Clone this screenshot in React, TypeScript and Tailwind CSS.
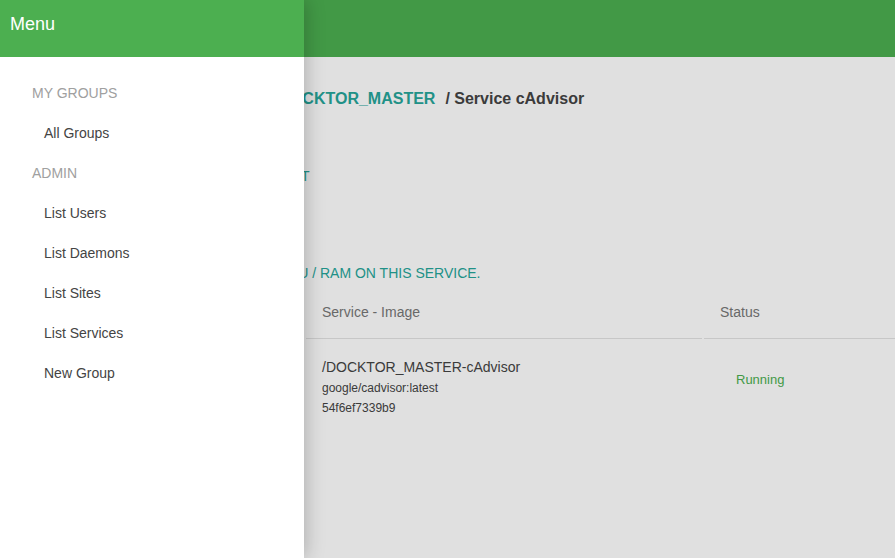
import React from 'react';

const menu = [
  { type: 'header', label: 'My Groups' },
  { type: 'item', label: 'All Groups' },
  { type: 'header', label: 'Admin' },
  { type: 'item', label: 'List Users' },
  { type: 'item', label: 'List Daemons' },
  { type: 'item', label: 'List Sites' },
  { type: 'item', label: 'List Services' },
  { type: 'item', label: 'New Group' },
];

const Sidenav = () => (
  <aside className="absolute left-0 top-0 h-full w-[304px] bg-white shadow-[2px_0_18px_rgba(0,0,0,0.22)]">
    <div className="flex h-[57px] items-center bg-[#4caf50] px-[10px] pb-[8px]">
      <h2 className="text-[18px] font-normal text-white">Menu</h2>
    </div>
    <ul className="pt-[16px]">
      {menu.map(m =>
        m.type === 'header' ? (
          <li key={m.label} className="flex h-[40px] items-center pl-[32px] text-[14px] uppercase text-[#a0a0a0]">
            {m.label}
          </li>
        ) : (
          <li key={m.label} className="flex h-[40px] items-center pl-[44px] text-[14px] text-[#444]">
            {m.label}
          </li>
        )
      )}
    </ul>
  </aside>
);

export default function App() {
  return (
    <div className="relative h-[558px] w-[895px] overflow-hidden bg-white font-['Liberation_Sans',Arial,sans-serif]">
      <header className="flex h-[57px] items-center bg-[#4caf50] px-4 text-white">
        <span className="text-[20px]">Docktor</span>
      </header>

      <main className="pl-[24px]">
        <div className="mt-[30px] flex h-[24px] items-center gap-[10px] text-[16px] font-bold">
          <a className="text-[#26a69a]">Groups</a>
          <span className="text-[#444]">/</span>
          <a className="ml-[173px] text-[#26a69a]">DOCKTOR_MASTER</a>
          <span className="text-[#444]">/ Service cAdvisor</span>
        </div>

        <div className="mt-[55px] flex h-[20px] items-center gap-8 pl-[177px] text-[14px] uppercase text-[#26a69a]">
          <a>Edit</a>
          <a>Start</a>
        </div>

        <div className="mt-[77px] flex h-[20px] items-center pl-[185px] text-[14px] uppercase text-[#26a69a]">
          Monitor CPU / RAM on this service.
        </div>

        <div className="mt-[7px] grid grid-cols-[280px_396px_1fr] gap-x-[2px]">
          <div className="flex h-[49px] items-center border-b border-[#e3e3e3] px-4 pb-[4px] text-[14px] text-[#777]">Actions</div>
          <div className="flex h-[49px] items-center border-b border-[#e3e3e3] px-4 pb-[4px] text-[14px] text-[#777]">Service - Image</div>
          <div className="flex h-[49px] items-center border-b border-[#e3e3e3] px-4 pb-[4px] text-[14px] text-[#777]">Status</div>

          <div className="px-4 pt-[18px] text-[14px] text-[#444]">Logs</div>
          <div className="flex flex-col px-4 pt-[18px]">
            <span className="h-[20px] text-[14px] leading-[20px] text-[#444]">/DOCKTOR_MASTER-cAdvisor</span>
            <span className="mt-[1px] h-[20px] text-[12px] leading-[20px] text-[#444]">google/cadvisor:latest</span>
            <span className="h-[20px] text-[12px] leading-[20px] text-[#444]">54f6ef7339b9</span>
          </div>
          <div className="flex items-start pl-[32px] pt-[31px] text-[13px] text-[#4caf50]">Running</div>
        </div>
      </main>

      <div className="absolute inset-0 bg-black/[0.12]" />
      <Sidenav />
    </div>
  );
}
